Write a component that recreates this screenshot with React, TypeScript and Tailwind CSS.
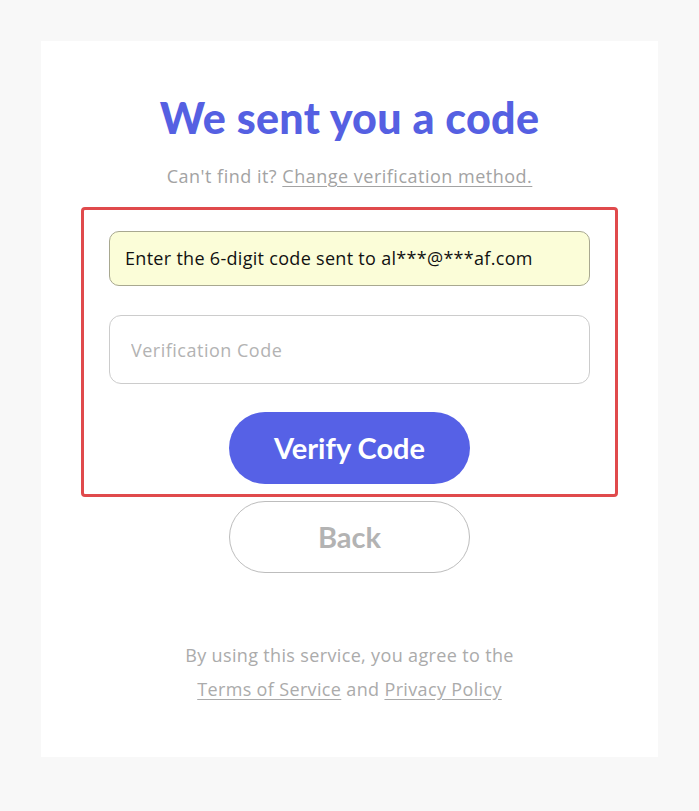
import React, { useState } from 'react';

const App = () => {
    const [code, setCode] = useState('');

    return (
        <div className="min-h-[811px] w-full bg-[#f8f8f8] pt-[41px] pb-[54px]" style={{ fontFamily: '"Open Sans", "Liberation Sans", sans-serif' }}>
            <div className="mx-[41px] h-[716px] bg-white flex flex-col items-center">
                {/* Header */}
                <h1 className="mt-[51px] text-[43px] leading-[52px] font-black text-[#5560e2] tracking-[0.3px]" style={{ fontFamily: 'Lato, "Open Sans", sans-serif' }}>
                    We sent you a code
                </h1>
                <p className="mt-[20px] text-[18px] leading-[24px] tracking-[0.5px] text-[#a3a3a3]">
                    Can't find it?{' '}
                    <a href="#" className="underline underline-offset-[3px]">Change verification method.</a>
                </p>

                {/* Highlighted form */}
                <div className="mt-[19px] w-[537px] border-[3px] border-[#e04a4c] rounded-[4px] px-[25px] pt-[21px] pb-[10px] flex flex-col items-center">
                    <div className="w-full h-[55px] rounded-[10px] border border-[#a8a890] bg-[#fbfdd8] flex items-center px-[15px]">
                        <span className="text-[18px] tracking-[0.3px] text-[#111]">
                            Enter the 6-digit code sent to al***@***af.com
                        </span>
                    </div>
                    <input
                        value={code}
                        onChange={e => setCode(e.target.value)}
                        placeholder="Verification Code"
                        className="mt-[29px] w-full h-[69px] rounded-[12px] border border-[#cccccc] px-[21px] text-[18px] tracking-[0.5px] text-[#333] placeholder:text-[#b3b3b3] outline-none"
                    />
                    <button className="mt-[28px] w-[241px] h-[72px] rounded-full bg-[#5661e6] text-white text-[29px] font-bold" style={{ fontFamily: 'Lato, sans-serif' }}>
                        Verify Code
                    </button>
                </div>

                <button className="mt-[4px] w-[241px] h-[72px] rounded-full border border-[#bdbdbd] bg-white text-[#b3b3b3] text-[29px] font-bold" style={{ fontFamily: 'Lato, sans-serif' }}>
                    Back
                </button>

                {/* Footer */}
                <div className="mt-[70px] flex flex-col items-center text-[18px] tracking-[0.35px] text-[#ababab]">
                    <p className="leading-[24px]">By using this service, you agree to the</p>
                    <p className="mt-[10px] leading-[24px]">
                        <a href="#" className="underline underline-offset-[3px]">Terms of Service</a>
                        {' '}and{' '}
                        <a href="#" className="underline underline-offset-[3px]">Privacy Policy</a>
                    </p>
                </div>
            </div>
        </div>
    );
};

export default App;
